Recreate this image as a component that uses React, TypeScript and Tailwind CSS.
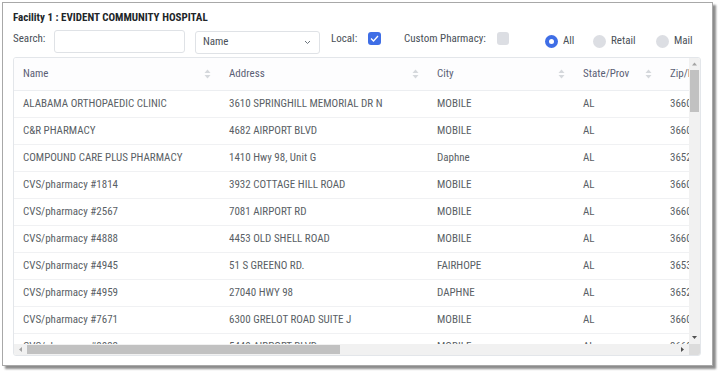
import React from "react";

const rows = [
  ["ALABAMA ORTHOPAEDIC CLINIC", "3610 SPRINGHILL MEMORIAL DR N", "MOBILE", "AL", "36608"],
  ["C&R PHARMACY", "4682 AIRPORT BLVD", "MOBILE", "AL", "36608"],
  ["COMPOUND CARE PLUS PHARMACY", "1410 Hwy 98, Unit G", "Daphne", "AL", "36526"],
  ["CVS/pharmacy #1814", "3932 COTTAGE HILL ROAD", "MOBILE", "AL", "36609"],
  ["CVS/pharmacy #2567", "7081 AIRPORT RD", "MOBILE", "AL", "36608"],
  ["CVS/pharmacy #4888", "4453 OLD SHELL ROAD", "MOBILE", "AL", "36608"],
  ["CVS/pharmacy #4945", "51 S GREENO RD.", "FAIRHOPE", "AL", "36532"],
  ["CVS/pharmacy #4959", "27040 HWY 98", "DAPHNE", "AL", "36526"],
  ["CVS/pharmacy #7671", "6300 GRELOT ROAD SUITE J", "MOBILE", "AL", "36609"],
  ["CVS/pharmacy #8032", "5440 AIRPORT BLVD", "MOBILE", "AL", "36608"],
];

const cols = [
  { label: "Name", w: "w-[206px]" },
  { label: "Address", w: "w-[208px]" },
  { label: "City", w: "w-[146px]" },
  { label: "State/Prov", w: "w-[87px]" },
  { label: "Zip/Postal", w: "w-[90px]" },
];

function SortIcon() {
  return (
    <svg width="7" height="10" viewBox="0 0 7 10" className="shrink-0">
      <path d="M3.5 0.5 L6.5 4 L0.5 4 Z" fill="#d5d8dc" />
      <path d="M3.5 9.5 L6.5 6 L0.5 6 Z" fill="#d5d8dc" />
    </svg>
  );
}

function Radio({ on, label, w }: { on?: boolean; label: string; w: string }) {
  return (
    <div className={`${w} flex items-center gap-[5px] shrink-0`}>
      {on ? (
        <span className="w-[13px] h-[13px] rounded-full bg-[#3f6ee6] flex items-center justify-center shrink-0">
          <span className="w-[5px] h-[5px] rounded-full bg-white" />
        </span>
      ) : (
        <span className="w-[13px] h-[13px] rounded-full bg-[#dcdee3] shrink-0" />
      )}
      <span className="text-[11px] text-[#495057] whitespace-nowrap">{label}</span>
    </div>
  );
}

export default function App() {
  return (
    <div className="w-[719px] h-[372px] bg-white relative overflow-hidden font-['Roboto_Condensed',sans-serif]">
      <div className="absolute left-[2px] top-[2px] w-[711px] h-[364px] bg-white border border-[#a8a8a8] shadow-[3px_3px_2px_rgba(0,0,0,0.45)] flex flex-col px-[10px] pt-[8px]">
        <div className="text-[11px] font-bold text-[#212529] leading-[14px] whitespace-nowrap">
          Facility 1 : EVIDENT COMMUNITY HOSPITAL
        </div>
        <div className="flex items-start mt-[5px] h-[27px] shrink-0">
          <span className="w-[41px] shrink-0 text-[11px] leading-[14px] text-[#495057] mt-[2px] whitespace-nowrap">Search:</span>
          <div className="w-[131px] h-[23px] shrink-0 border border-[#dfe2e6] rounded-[3px]" />
          <div className="ml-[10px] w-[125px] h-[23px] shrink-0 border border-[#dfe2e6] rounded-[3px] mt-[1px] flex items-center justify-between pl-[7px] pr-[8px]">
            <span className="text-[11px] text-[#495057]">Name</span>
            <svg width="7" height="5" viewBox="0 0 7 5">
              <path d="M1 1 L3.5 3.5 L6 1" stroke="#6c757d" strokeWidth="1" fill="none" />
            </svg>
          </div>
          <span className="ml-[11px] w-[37px] shrink-0 text-[11px] leading-[14px] text-[#495057] mt-[2px] whitespace-nowrap">Local:</span>
          <span className="mt-[2px] w-[13px] h-[13px] shrink-0 rounded-[3px] bg-[#3f6ee6] flex items-center justify-center">
            <svg width="9" height="7" viewBox="0 0 9 7">
              <path d="M1 3.5 L3.5 6 L8 1" stroke="white" strokeWidth="1.3" fill="none" />
            </svg>
          </span>
          <span className="ml-[23px] w-[93px] shrink-0 text-[11px] leading-[14px] text-[#495057] mt-[2px] whitespace-nowrap">Custom Pharmacy:</span>
          <span className="mt-[2px] w-[12px] h-[13px] shrink-0 rounded-[3px] bg-[#dcdee3]" />
          <div className="ml-[36px] mt-[3px] flex items-center">
            <Radio on label="All" w="w-[48px]" />
            <Radio label="Retail" w="w-[63px]" />
            <Radio label="Mail" w="w-[40px]" />
          </div>
        </div>
        <div className="w-[688px] h-[299px] shrink-0 border border-[#e3e6ea] rounded-[3px] flex flex-col overflow-hidden">
          <div className="flex flex-1 min-h-0">
            <div className="flex-1 overflow-hidden">
              <div className="w-[760px]">
                <div className="flex h-[33px] border-b border-[#eceef1] bg-[#fdfdfe]">
                  {cols.map((c) => (
                    <div key={c.label} className={`${c.w} shrink-0 flex items-center justify-between pl-[9px] pr-[9px] text-[11px] text-[#5b5f75] whitespace-nowrap`}>
                      <span>{c.label}</span>
                      <SortIcon />
                    </div>
                  ))}
                </div>
                {rows.map((r, i) => (
                  <div key={i} className="flex h-[27px] border-b border-[#f0f1f3]">
                    {r.map((v, j) => (
                      <div key={j} className={`${cols[j].w} shrink-0 flex items-center pl-[9px] text-[11px] text-[#5a5f66] whitespace-nowrap`}>
                        {v}
                      </div>
                    ))}
                  </div>
                ))}
              </div>
            </div>
            <div className="w-[11px] shrink-0 bg-[#f1f1f1] flex flex-col items-center">
              <svg width="7" height="9" viewBox="0 0 7 9" className="mt-[2px]">
                <path d="M3.5 2.5 L6 5.5 L1 5.5 Z" fill="#a3a3a3" />
              </svg>
              <div className="mt-[1px] w-[9px] h-[42px] bg-[#c1c1c1]" />
              <div className="flex-1" />
              <svg width="7" height="9" viewBox="0 0 7 9" className="mb-[2px]">
                <path d="M3.5 6 L6 3 L1 3 Z" fill="#505050" />
              </svg>
            </div>
          </div>
          <div className="flex h-[11px] shrink-0">
            <div className="flex-1 bg-[#f1f1f1] flex items-center">
              <svg width="9" height="7" viewBox="0 0 9 7" className="ml-[2px]">
                <path d="M3 3.5 L6 1 L6 6 Z" fill="#a3a3a3" />
              </svg>
              <div className="ml-[2px] w-[313px] h-[9px] bg-[#c1c1c1]" />
              <div className="flex-1" />
              <svg width="9" height="7" viewBox="0 0 9 7" className="mr-[2px]">
                <path d="M6 3.5 L3 1 L3 6 Z" fill="#505050" />
              </svg>
            </div>
            <div className="w-[11px] bg-[#dcdcdc]" />
          </div>
        </div>
      </div>
    </div>
  );
}
